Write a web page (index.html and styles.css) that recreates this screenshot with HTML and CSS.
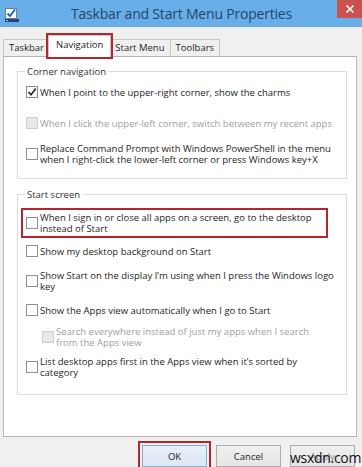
FILE: index.html
```html
<!DOCTYPE html>
<html>
<head>
<meta charset="utf-8">
<link rel="stylesheet" href="styles.css">
</head>
<body>
<div class="window">
  <header class="titlebar">
    <svg class="appicon" width="16" height="16" viewBox="0 0 16 16">
      <rect x="1.5" y="1.5" width="11" height="10" fill="#fff" stroke="#6d7f95"/>
      <path d="M3.5 6.5 L6 9 L11 2.5" fill="none" stroke="#1f63c9" stroke-width="2"/>
      <rect x="1" y="12" width="14" height="3" fill="#24457a"/>
      <rect x="2" y="13" width="2" height="1" fill="#9fc0ea"/>
    </svg>
    <h1 class="title">Taskbar and Start Menu Properties</h1>
    <div class="close">
      <svg width="10" height="10" viewBox="0 0 10 10"><path d="M1.5 1.5 L8.5 8.5 M8.5 1.5 L1.5 8.5" stroke="#fff" stroke-width="1.6"/></svg>
    </div>
  </header>

  <nav class="tabs">
    <div class="tab first">Taskbar</div>
    <div class="tab active">Navigation</div>
    <div class="tab">Start Menu</div>
    <div class="tab">Toolbars</div>
  </nav>

  <section class="panel">
    <div class="group g1">
      <span class="legend">Corner navigation</span>
      <div class="row r1"><span class="cb checked"><svg width="10" height="10" viewBox="0 0 10 10"><path d="M1.5 5 L4 7.8 L8.8 1.6" fill="none" stroke="#222" stroke-width="1.6"/></svg></span><span class="txt">When I point to the upper-right corner, show the charms</span></div>
      <div class="row r2 disabled"><span class="cb"></span><span class="txt">When I click the upper-left corner, switch between my recent apps</span></div>
      <div class="row r3"><span class="cb"></span><span class="txt">Replace Command Prompt with Windows PowerShell in the menu<br>when I right-click the lower-left corner or press Windows key+X</span></div>
    </div>

    <div class="group g2">
      <span class="legend">Start screen</span>
      <div class="row s1 hl"><span class="cb"></span><span class="txt">When I sign in or close all apps on a screen, go to the desktop<br>instead of Start</span></div>
      <div class="row s2"><span class="cb"></span><span class="txt">Show my desktop background on Start</span></div>
      <div class="row s3"><span class="cb"></span><span class="txt">Show Start on the display I’m using when I press the Windows logo<br>key</span></div>
      <div class="row s4"><span class="cb"></span><span class="txt">Show the Apps view automatically when I go to Start</span></div>
      <div class="row s5 sub disabled"><span class="cb"></span><span class="txt">Search everywhere instead of just my apps when I search<br>from the Apps view</span></div>
      <div class="row s6"><span class="cb"></span><span class="txt">List desktop apps first in the Apps view when it’s sorted by<br>category</span></div>
    </div>
  </section>

  <footer class="buttons">
    <button class="btn default hl-btn">OK</button>
    <button class="btn">Cancel</button>
    <button class="btn off">Apply</button>
  </footer>
  <div class="watermark">wsxdn.com</div>
</div>
</body>
</html>
```
FILE: styles.css
```css
* { box-sizing: border-box; }
html, body { margin: 0; padding: 0; }
body {
  width: 362px;
  height: 467px;
  overflow: hidden;
  background: #f0f0f0;
  font-family: "Open Sans", "Noto Sans", sans-serif;
  color: #1e1e1e;
}
.window {
  position: relative;
  display: flex;
  flex-direction: column;
  width: 362px;
  height: 467px;
}
.titlebar {
  height: 27px;
  background: #68aee9;
  display: flex;
  align-items: center;
}
.appicon { margin-left: 4px; margin-top: 3px; flex: none; }
.title {
  flex: 1;
  margin: 0;
  text-align: center;
  font-weight: normal;
  font-size: 14px;
  color: #23476b;
  padding-left: 6px;
  letter-spacing: -0.2px;
}
.close {
  align-self: flex-start;
  width: 25px;
  height: 18px;
  background: #c9524c;
  display: flex;
  align-items: center;
  justify-content: center;
}
.tabs {
  display: flex;
  align-items: flex-end;
  padding-left: 3px;
  margin-top: 7px;
  height: 22px;
  font-size: 9.5px;
}
.tab {
  height: 17px;
  line-height: 15px;
  padding: 0 5px;
  border: 1px solid #c9c9c9;
  border-bottom: none;
  background: #f0f0f0;
  color: #1e1e1e;
  margin-bottom: 0;
}
.tab + .tab { border-left: none; }
.tab.active {
  height: 22px;
  line-height: 18px;
  background: #fff;
  margin: 0 -1px -1px -2px;
  padding: 0 7px 0 7px;
  border: 1px solid #c9c9c9;
  border-bottom: none;
  position: relative;
  z-index: 2;
  outline: 2px solid #b3262e;
  outline-offset: 0px;
}
.tab.active + .tab { border-left: none; }
.panel {
  margin-left: 3px;
  width: 354px;
  height: 381px;
  background: #fff;
  border: 1px solid #b5b5b5;
  display: flex;
  flex-direction: column;
  font-size: 9.5px;
}
.group {
  border: 1px solid #dcdcdc;
  margin: 14px 9px 0 13px;
  padding: 0 0 13px 8px;
  display: flex;
  flex-direction: column;
  align-items: flex-start;
}
.legend {
  line-height: 13px;
  margin-top: -7px;
  margin-left: -1px;
  padding: 0 2px;
  background: #fff;
  color: #333;
}
.row {
  display: flex;
  align-items: center;
  white-space: nowrap;
}
.txt { line-height: 11px; color: #1e1e1e; }
.cb {
  flex: none;
  width: 12px;
  height: 12px;
  margin-right: 2px;
  border: 1px solid #8e8e8e;
  background: #fff;
  display: flex;
  align-items: center;
  justify-content: center;
}
.disabled .cb { border-color: #cfcfcf; background: #e8e8e8; }
.disabled .txt { color: #a0a0a0; }
.r1 { margin-top: 8px; }
.r2 { margin-top: 19px; }
.r3 { margin-top: 14px; }
.g2 { margin-top: 15px; padding-bottom: 16px; }
.s1 { margin-top: 11px; }
.s2 { margin-top: 11px; }
.s3 { margin-top: 13px; }
.s4 { margin-top: 12px; }
.s5 { margin-top: 10px; }
.s6 { margin-top: 8px; }
.sub { margin-left: 16px; }
.hl {
  width: 299px;
  outline: 2px solid #b3262e;
  outline-offset: 2px;
  margin-left: -1px;
  padding-left: 1px;
}
.buttons {
  display: flex;
  justify-content: flex-end;
  gap: 9px;
  padding-right: 7px;
  margin-top: 8px;
}
.btn {
  width: 65px;
  height: 22px;
  font-family: inherit;
  font-size: 9.5px;
  color: #1e1e1e;
  background: linear-gradient(#f0f0f0, #e5e5e5);
  border: 1px solid #acacac;
  padding: 0;
}
.btn.default {
  border-color: #7fb0de;
  background: linear-gradient(#e8eff7, #dce7f3);
  outline: 2px solid #b3262e;
  outline-offset: 2px;
}
.btn.off { color: #8c8c8c; }
.watermark {
  position: absolute;
  left: 290px;
  top: 448px;
  font-family: "Open Sans", sans-serif;
  font-size: 14px;
  color: #111;
  letter-spacing: -0.3px;
}
```
